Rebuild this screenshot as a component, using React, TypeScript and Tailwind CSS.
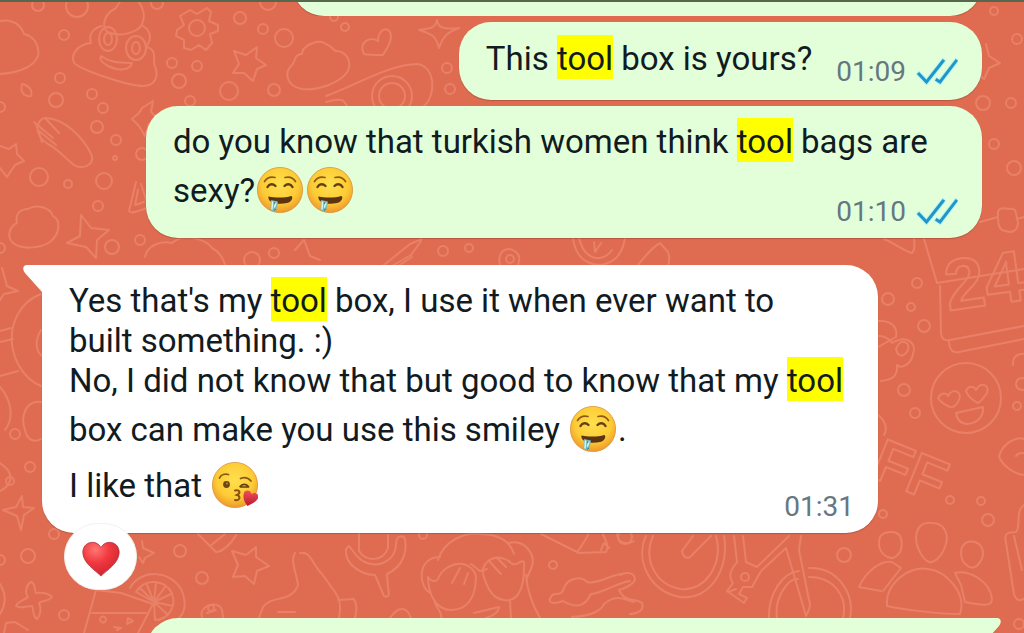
import type { ReactNode } from "react";
import clsx from "clsx";

const circles = [
  [38, 5, 6], [77, 6, 11], [157, 3, 6], [64, 35, 5], [172, 63, 5], [197, 66, 5], [179, 81, 7],
  [240, 18, 6], [263, 29, 5], [284, 38, 9], [268, 2, 8], [229, 91, 9], [274, 90, 6], [60, 78, 5],
  [56, 100, 7], [92, 94, 5], [103, 108, 5], [97, 127, 6], [116, 140, 5], [115, 158, 2], [39, 177, 9],
  [68, 184, 4], [104, 181, 8], [98, 206, 5], [112, 247, 7], [140, 240, 5], [0, 107, 5], [0, 248, 5],
  [190, 101, 5], [142, 154, 6], [345, 27, 4], [334, 17, 4], [447, 68, 5], [450, 89, 5],
  [983, 103, 7], [1011, 103, 5], [1017, 39, 5], [994, 11, 4], [994, 144, 5], [1014, 168, 7],
  [252, 260, 8], [274, 253, 5], [443, 251, 5], [469, 248, 4], [917, 283, 5], [888, 299, 6],
  [911, 307, 4], [924, 326, 6], [904, 390, 6], [915, 413, 5], [1022, 384, 6], [1017, 406, 4],
  [883, 514, 4], [950, 500, 4], [981, 501, 4], [988, 520, 6], [844, 555, 7], [28, 556, 7], [0, 560, 5],
  [54, 534, 5], [180, 551, 6], [202, 578, 6], [64, 615, 5], [553, 565, 4], [423, 535, 4],
  [625, 537, 7], [1019, 624, 5], [15, 434, 5], [30, 467, 5], [10, 481, 4],
];

const doodles = [
  // clouds
  "M-4 22C8 18 20 22 24 34C34 36 40 46 38 56C34 68 14 74 -4 74",
  "M28 209C36 204 50 207 53 216C62 221 59 235 50 242C39 249 20 250 12 242C6 234 11 226 17 223C15 214 20 209 28 209Z",
  "M302 54C302 46 318 38 326 44C332 46 334 51 336 51C346 51 352 61 348 71C340 83 318 91 302 89C286 86 284 72 292 65C296 61 294 54 302 54Z",
  "M145 257C147 246 160 240 172 243C184 232 208 240 212 248C220 252 224 260 226 268",
  // smiling heap
  "M116 8C120 0 126 -4 132 -2C140 0 146 12 143 21M116 8C102 15 102 29 108 32C120 38 142 32 143 21M102 26C90 29 89 37 91 43C75 45 70 57 75 64C90 74 132 86 143 86C155 86 160 76 154 64C154 56 156 49 146 47C154 36 148 29 143 26",
  "M101 56C112 64 122 62 132 63C130 71 118 71 108 66C102 63 99 59 101 56Z",
  // gear
  "M190 10L197 14L207 8L211 12L209 21L218 25L218 31L210 34L212 43L206 50L199 45L191 50L184 48L184 40L176 36L177 30L184 25L180 16Z",
  // stars
  "M257 47L256 58L266 65L257 69L253 81L244 73L233 73L239 64L234 51L246 55Z",
  "M153 101L151 112L160 121L149 124L145 136L139 126L132 119L139 113L142 108Z",
  "M0 146L9 149L16 144L17 154L24 161L15 165L7 177L0 168",
  "M256 547L256 557L269 566L257 571L254 584L245 576L233 577L238 565L232 551L246 555Z",
  "M142 541L143 548L154 553L145 558L143 563L139 557",
  "M986 44L989 56L1000 63L989 68L984 79L976 72",
  // sparkles
  "M81 215L91 228L109 230L97 240L96 258L86 247L67 243L80 236Z",
  "M437 20C438 27 442 30 459 28C448 32 443 36 439 48C436 36 432 34 419 30C432 28 435 28 437 20Z",
  "M2 268L7 286L18 291L4 294L-3 304",
  "M22 496L23 507L34 508L24 515L21 530L17 516L3 510L16 507Z",
  // heart and drop
  "M364 54C358 42 370 36 378 41C378 28 390 25 391 36C391 45 384 52 383 55C374 55 368 55 364 54Z",
  "M22 84C28 85 33 90 31 96C24 97 20 92 22 84Z",
  // hand
  "M48 144C32 134 37 119 45 118C63 118 83 136 92 156C94 167 80 169 74 165C65 158 58 149 48 144M34 122L53 138M38 130L56 145M45 118L59 133M36 124L42 142",
  // guitar and cone
  "M326 96C354 86 390 64 418 64C436 68 436 96 424 106M326 102C344 97 344 101 347 106",
  "M136 182L129 211C132 215 139 210 147 208M138 190L135 205L144 202M141 184L147 202",
  // ladder, clock and bell
  "M384 265L410 244L422 239M392 266L411 255L421 241M398 266L412 257M500 265C496 248 512 244 519 256C520 260 518 264 518 266",
  "M573 238C576 264 600 272 616 258C621 253 624 245 625 238M579 238C584 260 602 264 612 250M594 242L595 252L601 243",
  "M638 265C646 255 654 246 660 243L668 252C670 258 669 263 668 266M295 250L304 240L310 256L320 260",
  // calendar
  "M884 239C896 244 904 251 912 253C916 249 914 243 914 238M924 239L937 283L1024 269M940 286L941 334C942 340 946 341 950 340L1024 326M949 342C950 351 953 353 959 352L1024 339M980 222L998 217M998 215C997 209 1001 207 1009 209C1019 207 1015 217 1018 222C1018 232 1011 233 1006 231C998 231 998 222 998 215ZM1017 219L1024 217",
  // cup
  "M878 321C892 320 898 328 896 337L878 347M879 336C888 336 893 344 892 343C908 334 917 344 913 354C911 365 901 369 897 365C898 378 890 380 881 381M896 349C900 337 911 342 908 350C904 357 898 358 896 349Z",
  // heart eyed face
  "M938 398C942 391 948 394 948 396C953 387 963 392 959 400C957 405 953 408 950 407C945 405 941 403 938 398ZM966 391C969 384 975 387 976 390C981 381 990 385 987 393C984 397 981 402 978 403C972 400 968 397 966 391ZM956 413L983 407C984 418 976 423 968 424C960 424 957 419 956 413Z",
  // shapes running off the right edge
  "M1013 365C1012 355 1020 353 1027 354M1027 440C1015 434 1001 446 999 457C1004 468 1018 476 1027 475M1016 456C1019 451 1024 453 1027 454",
  "M878 415C885 420 888 429 884 435",
  // shapes running off the left edge
  "M41 294C20 302 10 323 12 344C14 363 26 380 41 386M0 331L11 328M0 342L13 339M0 376L18 371M41 330C35 340 35 350 42 356M0 387C12 401 14 418 5 430M41 402C26 400 20 416 25 430C27 440 34 443 41 439M0 463C14 472 14 484 0 491",
  "M31 582C36 583 34 591 36 593C43 592 49 594 52 597C48 602 42 600 39 603C42 609 40 616 37 619C32 616 34 608 32 606C26 606 21 609 16 606C17 602 25 600 28 597C24 592 27 584 31 582Z",
  "M0 584C5 592 7 603 0 614M4 633L6 623L15 622L28 630",
  // drink with lemon
  "M96 590L84 633M96 590L121 593L153 604L138 633M92 613L146 613M106 619A3 3 0 1 0 106 620M128 618L133 621L127 624ZM114 627L121 628L117 630",
  "M130 588C140 569 171 569 182 591C187 604 184 614 177 620M136 592C145 577 165 580 172 593C178 611 164 620 155 620L154 602ZM154 602L147 585M154 602L156 583M154 602L165 587M154 602L171 594M154 602L173 606M154 602L168 615M154 602L140 588",
  // bottle
  "M198 534L216 552C221 552 230 546 236 535M210 546L225 534M295 553C290 560 296 571 298 585C292 603 271 595 263 607L259 618M278 612L295 612M202 617C198 606 218 599 222 610L223 618M207 613L216 610",
  "M300 553C311 551 311 563 322 574L335 592C341 600 341 609 339 618M338 600L354 599C358 606 356 612 355 618M390 618C398 606 407 606 411 618",
  // trident
  "M359 533V551C366 562 383 562 388 548V535M346 549C344 566 364 575 375 575L384 596C388 598 390 596 388 588L387 574C404 566 407 551 405 539C403 535 396 535 396 544C396 559 382 566 371 564C358 562 353 550 349 546Z",
  // monkey covering its eyes
  "M438 560C444 540 466 532 479 534C498 534 510 541 514 554M440 557C417 557 418 586 430 593M509 543C525 539 537 555 531 569L526 580M428 577C431 582 436 582 438 579C444 562 470 557 476 576C476 598 467 610 451 610C436 610 428 594 428 577ZM483 574C481 559 500 552 511 563C517 568 521 558 524 562C525 592 516 602 504 600C491 599 486 584 483 574ZM471 564L480 571L487 569M452 583L460 568M464 584L468 573M489 561L501 574M497 558L506 567M434 600C436 609 443 612 441 618M526 575C527 588 532 604 540 618M510 601L511 618M474 613L499 607C499 611 494 616 486 618",
  // wrench
  "M541 534L579 553L606 552C610 544 604 539 603 534M578 551C585 541 588 535 588 534M601 550L604 543L609 548M617 534C618 544 628 545 634 541",
  "M551 597C552 591 562 598 564 588C567 579 580 575 587 582C598 585 610 574 627 573M551 597C547 602 552 605 563 601C575 608 584 608 591 594C603 593 616 583 630 581M572 617C594 616 602 609 604 604C617 593 625 600 634 602M620 575C628 571 635 573 635 580C632 586 625 588 619 590C626 604 635 597 642 603C645 610 637 614 630 614",
  // bicycle
  "M646 536C635 560 649 591 680 597C710 601 730 568 724 536M653 536C643 559 655 585 681 589C706 592 724 562 716 536M693 536L682 551C683 558 689 560 692 555L711 536M734 536L737 562C730 571 728 576 733 583L727 591L744 603L747 598L739 594L743 587L752 587L761 571L786 548L806 616C810 609 811 604 809 600L799 550L801 536M743 536L746 562L757 567L789 536M728 592L736 589M769 618C768 594 783 572 799 571M777 618C774 598 788 578 798 579M809 568C838 567 855 594 850 618M809 577C835 577 848 598 843 618",
  // group of people
  "M881 591L859 587C866 571 881 560 892 562L901 568L883 591M887 606C885 584 909 565 928 569C946 571 967 593 960 614C938 614 899 609 887 606ZM955 573C968 570 990 580 992 599C992 606 985 606 965 602L961 585ZM879 545C880 553 887 559 893 558C901 555 904 545 900 536C896 530 884 531 880 537C879 540 879 542 879 545ZM916 537C917 525 924 522 932 523C943 523 949 532 946 544C942 557 934 563 929 562C922 559 916 547 916 537ZM961 553C961 544 967 540 975 542C984 545 985 555 980 562C973 574 961 564 961 553Z",
  "M1024 505C1015 511 1021 529 1016 532C1006 532 1004 534 1006 543L1014 594C1016 601 1020 601 1024 599M1014 536L1022 570",
];

const Wallpaper = () => (
  <svg
    aria-hidden="true"
    className="absolute inset-0 h-full w-full"
    viewBox="0 0 1024 633"
    preserveAspectRatio="xMidYMid slice"
    fill="none"
    stroke="#e98068"
    strokeWidth="2"
    strokeLinecap="round"
    strokeLinejoin="round"
  >
    {circles.map(([cx, cy, r], index) => (
      <circle key={index} cx={cx} cy={cy} r={r} />
    ))}
    {doodles.map((d, index) => (
      <path key={index} d={d} />
    ))}
    <circle cx="197" cy="28" r="8" />
    <ellipse cx="108" cy="39" rx="9" ry="12" />
    <ellipse cx="108" cy="39" rx="4" ry="6" />
    <ellipse cx="136" cy="48" rx="10" ry="12" />
    <ellipse cx="136" cy="48" rx="4" ry="6" />
    <circle cx="392" cy="96" r="20" />
    <circle cx="392" cy="96" r="13" />
    <circle cx="510" cy="259" r="4" />
    <circle cx="745" cy="577" r="4" />
    <circle cx="211" cy="608" r="3" />
    <circle cx="966" cy="398" r="35" />
    <g transform="rotate(-8 980 285)" className="font-['Liberation_Sans',sans-serif] text-[72px] font-bold">
      <text x="945" y="306">24</text>
    </g>
    <g transform="rotate(22 910 480)" className="font-['Liberation_Sans',sans-serif] text-[60px] font-bold">
      <text x="870" y="492">FF</text>
    </g>
  </svg>
);

const FaceGradient = ({ id }: { id: string }) => (
  <radialGradient id={id} cx="50%" cy="38%" r="62%">
    <stop offset="0" stopColor="#ffe04d" />
    <stop offset="0.65" stopColor="#fdcb35" />
    <stop offset="1" stopColor="#ee982c" />
  </radialGradient>
);

const emojiClass = "mx-[2px] my-1 inline-block h-12 w-[46px] align-[-16px]";

const Drooling = ({ id }: { id: string }) => (
  <svg role="img" aria-label="Drooling face" className={emojiClass} viewBox="0 0 46 48" fill="none">
    <defs>
      <FaceGradient id={id} />
    </defs>
    <circle cx="23" cy="24" r="22.6" fill={`url(#${id})`} stroke="#d99339" strokeWidth="0.8" />
    <g stroke="#8a5a17" strokeWidth="1.7" strokeLinecap="round">
      <path d="M7.5 15.5C10 11.5 14 10.5 18 11.5" />
      <path d="M28 11.5C32 10.5 36 11.5 38.5 15.5" />
    </g>
    <g stroke="#624014" strokeWidth="2.4" strokeLinecap="round">
      <path d="M10.5 21C12.5 17.5 16 17.5 18.5 20" />
      <path d="M27.5 20C30 17.5 33.5 17.5 35.5 21" />
    </g>
    <path
      d="M12 30.5C17 32 29 32 34 30C36.5 30 35.5 36 30 37C24 38.5 17 38 13 35C11 33 11 30 12 30.5Z"
      fill="#5c3510"
    />
    <path d="M14 34L21 35.5L19.5 43C18.5 46 14 46 13.5 43Z" fill="#75b9bd" />
    <path d="M15.5 36L15 43M19 37L17.5 41" stroke="#d9f6f2" strokeWidth="1.5" strokeLinecap="round" />
    <path d="M18 36L17.5 38M19 43L17 44.5" stroke="#347e8b" />
  </svg>
);

const BlowingKiss = () => (
  <svg role="img" aria-label="Face blowing a kiss" className={emojiClass} viewBox="0 0 46 48" fill="none">
    <defs>
      <FaceGradient id="kiss-face" />
      <linearGradient id="kiss-heart" x1="0" y1="0" x2="0" y2="1">
        <stop offset="0" stopColor="#f0505a" />
        <stop offset="1" stopColor="#bd1830" />
      </linearGradient>
    </defs>
    <circle cx="23" cy="24" r="22.6" fill="url(#kiss-face)" stroke="#d99339" strokeWidth="0.8" />
    <path
      d="M7.5 17C9 13.5 13 12.5 16.5 13.5M28.5 17.5C32 16 36 16.5 39 20"
      stroke="#8a5a17"
      strokeWidth="1.8"
      strokeLinecap="round"
    />
    <circle cx="14.5" cy="23.5" r="3.4" fill="#6f4811" />
    <circle cx="15" cy="22.5" r="1" fill="#b88d41" />
    <path d="M28 25.5C31 22.5 34 23 36.5 25.5M28.5 25.8L36.5 26" stroke="#62400e" strokeWidth="1.7" strokeLinecap="round" />
    <path
      d="M23 29.5C28 28.5 29 32 25 34C29 35 28 40 23 39"
      stroke="#895010"
      strokeWidth="2"
      strokeLinecap="round"
    />
    <path
      d="M31.5 34C31.5 28.5 38.5 28 39.5 33C45 29.5 49 36 44 40C40.5 42.5 38 43.5 35.5 45C33 42 31 38 31.5 34Z"
      fill="url(#kiss-heart)"
    />
  </svg>
);

const Heart = () => (
  <svg aria-hidden="true" className="h-9 w-10" viewBox="0 0 40 38">
    <defs>
      <radialGradient id="heart" cx="35%" cy="22%" r="78%">
        <stop offset="0" stopColor="#ff7673" />
        <stop offset="0.5" stopColor="#f1383f" />
        <stop offset="1" stopColor="#cf2532" />
      </radialGradient>
    </defs>
    <path
      d="M20 37C14 31 1 23.5 .8 12C1 0 15.5 -2 20 7C24.5 -2 39 0 39.2 12C39 23.5 26 31 20 37Z"
      fill="url(#heart)"
      stroke="#a92b37"
      strokeWidth="0.8"
    />
  </svg>
);

const ReadTicks = () => (
  <svg
    role="img"
    aria-label="Read"
    className="h-8 w-[42px]"
    viewBox="0 0 42 32"
    fill="none"
    strokeLinecap="square"
  >
    <g stroke="#b4f3f4" strokeWidth="5">
      <path d="M3 18L10.5 26L27 5M21 24L24 26L40 5" />
    </g>
    <g stroke="#2095c8" strokeWidth="3">
      <path d="M3 18L10.5 26L27 5M21 24L24 26L40 5" />
    </g>
  </svg>
);

const Mark = () => <mark className="bg-[#ffff00] pt-1 pb-px text-inherit">tool</mark>;

const Meta = ({ time, read, className }: { time: string; read?: boolean; className?: string }) => (
  <div className={clsx("flex shrink-0 items-center justify-end gap-[10px]", className)}>
    <time className="text-[28px] leading-8 text-[#667781]">{time}</time>
    {read && <ReadTicks />}
  </div>
);

const Bubble = ({ sent, className, children }: { sent?: boolean; className?: string; children?: ReactNode }) => (
  <article
    className={clsx(
      "relative max-w-[836px] rounded-[32px] pt-4 pr-6 pb-[10px] pl-[27px] shadow-[0_1px_1px_rgba(90,40,20,0.3)]",
      sent ? "self-end bg-[#e3ffda]" : "self-start bg-white",
      className,
    )}
  >
    {children}
  </article>
);

const App = () => {
  return (
    <main className="relative h-screen overflow-hidden bg-[#df6c51] font-[Roboto,sans-serif] text-[33px] leading-10 text-[#111b21]">
      <Wallpaper />
      <div className="relative flex flex-col border-t-2 border-[#56674c] px-[42px]">
        <div className="flex h-[14px] w-[690px] max-w-full flex-col justify-end self-end overflow-hidden">
          <Bubble sent className="h-16 w-full shrink-0" />
        </div>

        <Bubble sent className="mt-[6px] flex items-end gap-6">
          <p className="pt-px pb-[11px]">
            This <Mark /> box is yours?
          </p>
          <Meta time="01:09" read className="pb-[2px]" />
        </Bubble>

        <Bubble sent className="mt-[6px] w-full">
          <p>
            do you know that turkish women think <Mark /> bags are
            <br />
            sexy?
            <Drooling id="drool-a" />
            <Drooling id="drool-b" />
          </p>
          <Meta time="01:10" read className="-mt-[22px]" />
        </Bubble>

        <Bubble className="mt-[27px] w-full rounded-tl-none">
          <svg aria-hidden="true" className="absolute top-0 -left-5 h-8 w-6 fill-white" viewBox="0 0 24 32">
            <path d="M24 0H5C1 0 0 4 3 8L20 27L24 32Z" />
          </svg>
          <p>
            Yes that&apos;s my <Mark /> box, I use it when ever want to
            <br />
            built something. :)
          </p>
          <p>
            No, I did not know that but good to know that my <Mark />
            <br />
            box can make you use this smiley <Drooling id="drool-c" />.
          </p>
          <p>
            I like that <BlowingKiss />
          </p>
          <Meta time="01:31" className="-mt-[22px]" />
        </Bubble>

        <button
          type="button"
          aria-label="Heart reaction"
          className="relative -mt-[10px] ml-[22px] flex h-[67px] w-[73px] items-center justify-center rounded-full border border-[#f0f2f0] bg-white pt-1"
        >
          <Heart />
        </button>

        <Bubble sent className="mt-7 h-16 w-full rounded-tr-none">
          <svg aria-hidden="true" className="absolute top-0 -right-5 h-8 w-6 fill-[#e3ffda]" viewBox="0 0 24 32">
            <path d="M0 0H19C23 0 24 4 21 8L4 27L0 32Z" />
          </svg>
        </Bubble>
      </div>
    </main>
  );
};

export default App;
